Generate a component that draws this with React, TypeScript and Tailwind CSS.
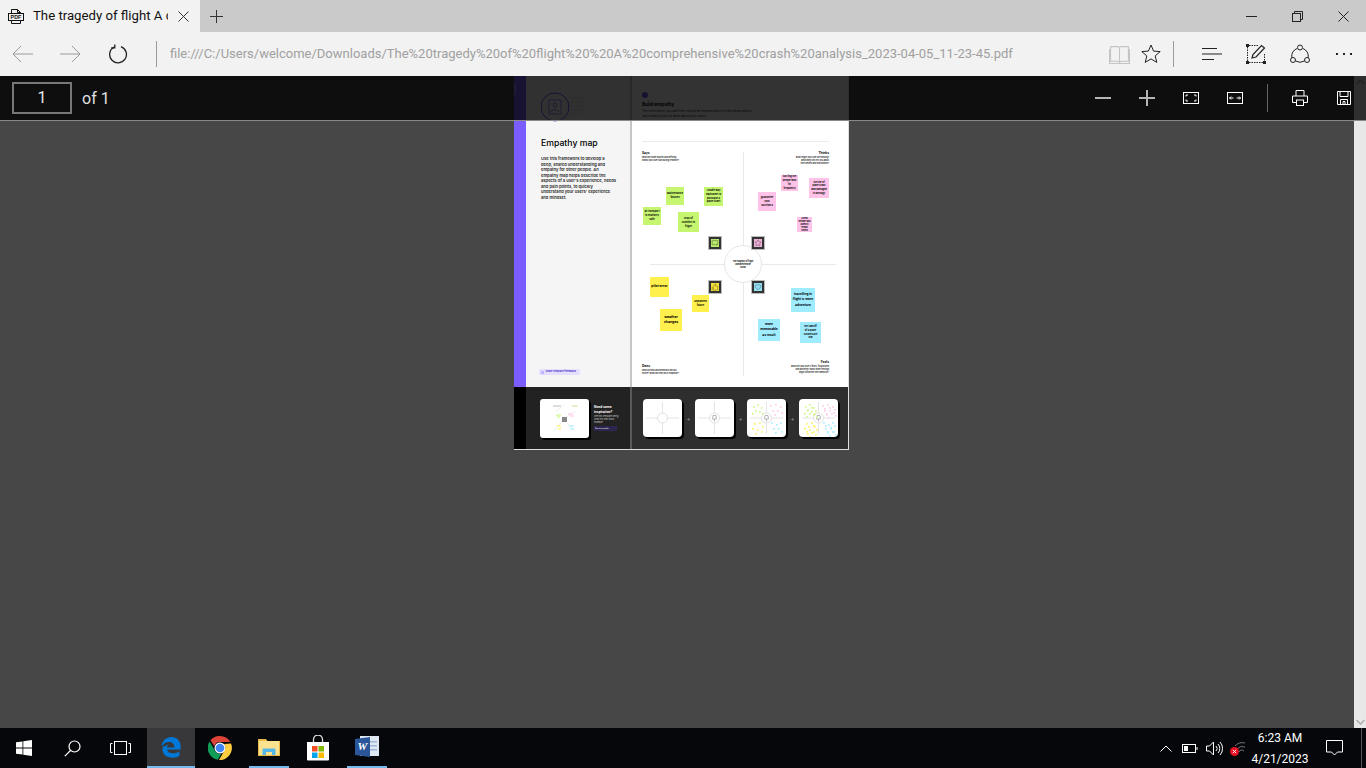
import type { ReactNode } from 'react';

const url =
  'file:///C:/Users/welcome/Downloads/The%20tragedy%20of%20flight%20%20A%20comprehensive%20crash%20analysis_2023-04-05_11-23-45.pdf';

type Note = { text: string; x: number; y: number; w: number; h: number; size: string; color: string };

// sticky notes sit on a free canvas, coordinates are relative to the white panel
const notes: Note[] = [
  { text: 'air transport\nis relatively\nsafe', x: 11, y: 131, w: 18, h: 18, size: 'text-[2.5px]', color: 'bg-[#c6f56f]' },
  { text: 'Maintenance\nfailures', x: 34, y: 111, w: 18, h: 18, size: 'text-[2.5px]', color: 'bg-[#c6f56f]' },
  { text: 'Unsafe way\nequivalent to\npurchase a\nplane ticket', x: 72, y: 111, w: 19, h: 19, size: 'text-[2.4px]', color: 'bg-[#c6f56f]' },
  { text: 'loss of\ncomfort in\nflight', x: 46, y: 136, w: 21, h: 20, size: 'text-[2.7px]', color: 'bg-[#c6f56f]' },
  { text: 'just fog the\npeople who\nfly\nfrequently', x: 149, y: 99, w: 17, h: 16, size: 'text-[2.4px]', color: 'bg-[#ffc2e8]' },
  { text: 'the site of\nplane crash\nwas damaged\nin ideology', x: 177, y: 102, w: 20, h: 20, size: 'text-[2.3px]', color: 'bg-[#ffc2e8]' },
  { text: 'guarantee\nyour\nsurvivors', x: 126, y: 116, w: 18, h: 19, size: 'text-[2.5px]', color: 'bg-[#ffc2e8]' },
  { text: 'a crew\nmember was\nasked to\nremain\nseated', x: 165, y: 141, w: 15, h: 15, size: 'text-[1.9px]', color: 'bg-[#ffc2e8]' },
  { text: 'pilot error', x: 18, y: 201, w: 19, h: 20, size: 'text-[3.4px]', color: 'bg-[#fff04d]' },
  { text: 'unplanned\nfailure', x: 60, y: 219, w: 17, h: 17, size: 'text-[2.4px]', color: 'bg-[#fff04d]' },
  { text: 'weather\nchanges', x: 28, y: 233, w: 22, h: 22, size: 'text-[3.4px]', color: 'bg-[#fff04d]' },
  { text: 'travelling in\nflight is more\nadventure', x: 159, y: 212, w: 24, h: 24, size: 'text-[3.2px]', color: 'bg-[#a0ecff]' },
  { text: 'more\nmemorable\nas result', x: 126, y: 243, w: 22, h: 22, size: 'text-[3.2px]', color: 'bg-[#a0ecff]' },
  { text: 'the takeoff\nof a plane\ncrashes are\nlow', x: 168, y: 246, w: 21, h: 21, size: 'text-[2.4px]', color: 'bg-[#a0ecff]' },
];

const tiles = [
  { x: 77, y: 161, color: 'bg-[#b9ea6c]', d: 'M1.5 2h7v5h-7zM7 7v1' },
  { x: 120, y: 161, color: 'bg-[#efb3d9]', d: 'M5 1l1.2 2.5 2.8.3-2 2 .5 2.7L5 7.2 2.500 8.500l.5-2.700-2-2 2.800-.3z' },
  { x: 77, y: 205, color: 'bg-[#f7df3c]', d: 'M3 4.500L5 1l1 .5v2.500h2.500l-.5 5H3zM1.500 4.500V9' },
  { x: 120, y: 205, color: 'bg-[#93dff2]', d: 'M5 8.500L1.500 5C.5 3 3.500 1 5 3c1.500-2 4.500 0 3.500 2z' },
];

const paragraph = [
  'Use this framework to develop a',
  'deep, shared understanding and',
  'empathy for other people. An',
  'empathy map helps describe the',
  "aspects of a user's experience, needs",
  'and pain points, to quickly',
  "understand your users' experience",
  'and mindset.',
];

const greenDots = [[6, 7], [10, 5], [14, 8], [8, 11], [12, 12], [5, 14], [15, 14]];
const pinkDots = [[23, 6], [28, 5], [33, 7], [25, 11], [30, 11], [34, 13], [27, 15]];
const yellowDots = [[7, 24], [12, 23], [15, 27], [5, 29], [10, 30], [14, 32], [8, 34]];
const blueDots = [[24, 23], [29, 25], [33, 23], [26, 29], [31, 29], [34, 32], [28, 33]];

function Stroke({ size = 20, children }: { size?: number; children: ReactNode }) {
  return (
    <svg width={size} height={size} viewBox="0 0 20 20" fill="none" stroke="currentColor" strokeWidth="1">
      {children}
    </svg>
  );
}

function Slot({ className, children }: { className: string; children?: ReactNode }) {
  return <div className={`flex items-center justify-center shrink-0 ${className}`}>{children}</div>;
}

function TabBar() {
  return (
    <div className="flex h-8 shrink-0 bg-[#cacaca] text-[#111]">
      <div className="flex w-[200px] items-center bg-[#f2f2f2] pl-2">
        <svg width="16" height="17" viewBox="0 0 16 17" fill="none" stroke="#111" strokeWidth="1">
          <path d="M3.500 5V1.500h6l3 3V5M3.500 12.500v3h9v-3M9.500 1.500v3h3" />
          <rect x="0.500" y="5.500" width="15" height="7" fill="#f2f2f2" />
          <text x="8" y="11" textAnchor="middle" fontSize="5.400" fontWeight="700" fill="#111" stroke="none" fontFamily="'Liberation Sans', sans-serif">PDF</text>
        </svg>
        <div className="ml-[9px] w-[135px] overflow-hidden whitespace-nowrap text-[13.2px]">
          The tragedy of flight A c
        </div>
        <svg className="ml-[10px]" width="11" height="11" viewBox="0 0 11 11" stroke="#333" strokeWidth="1">
          <path d="M.5.5l10 10M10.500.5l-10 10" />
        </svg>
      </div>
      <Slot className="w-8">
        <svg width="13" height="13" viewBox="0 0 13 13" stroke="#333" strokeWidth="1">
          <path d="M6.500 0v13M0 6.500h13" />
        </svg>
      </Slot>
      <div className="flex-1" />
      <Slot className="w-[46px]">
        <div className="h-px w-[11px] bg-[#222]" />
      </Slot>
      <Slot className="w-[46px]">
        <svg width="11" height="11" viewBox="0 0 11 11" fill="none" stroke="#222" strokeWidth="1">
          <rect x=".5" y="2.500" width="8" height="8" />
          <path d="M2.500 2.500v-2h8v8h-2" />
        </svg>
      </Slot>
      <Slot className="w-[46px]">
        <svg width="11" height="11" viewBox="0 0 11 11" stroke="#222" strokeWidth="1">
          <path d="M.5.5l10 10M10.500.5l-10 10" />
        </svg>
      </Slot>
    </div>
  );
}

function AddressBar() {
  return (
    <div className="flex h-11 shrink-0 items-center bg-[#f2f2f2]">
      <Slot className="w-[46px] text-[#9a9a9a]">
        <Stroke><path d="M0 10h20M8 2l-8 8 8 8" /></Stroke>
      </Slot>
      <Slot className="w-12 text-[#9a9a9a]">
        <Stroke><path d="M0 10h20M12 2l8 8-8 8" /></Stroke>
      </Slot>
      <Slot className="w-12 text-[#222]">
        <Stroke>
          <path strokeWidth="1.300" d="M6.200 3A8.400 8.400 0 1 0 13 2.600" />
          <path strokeWidth="1.300" d="M6.800 .4v3.400H3.200" />
        </Stroke>
      </Slot>
      <div className="ml-[14px] h-[26px] w-px bg-[#9b9b9b]" />
      <div className="ml-[13px] min-w-0 flex-1 overflow-hidden whitespace-nowrap text-[13px] text-[#a0a0a0]">{url}</div>
      <Slot className="w-8 text-[#c4c4c4]">
        <Stroke size={21}>
          <path d="M1.500 2.500h7.500l1 1 1-1h7.500v14h-7l-1.500 1-1.500-1h-7zM10 3.500v13.500M.5 5v13.500h19V5" />
        </Stroke>
      </Slot>
      <Slot className="w-8 text-[#222]">
        <Stroke>
          <path d="M10 1l2.600 6.100 6.600.5-5 4.300 1.600 6.500-5.800-3.500-5.800 3.500 1.600-6.500-5-4.300 6.600-.5z" />
        </Stroke>
      </Slot>
      <div className="ml-[6px] mr-4 h-[26px] w-px bg-[#9b9b9b]" />
      <Slot className="w-11 text-[#222]">
        <svg width="20" height="14" viewBox="0 0 20 14" stroke="currentColor">
          <path d="M0 1.500h15M0 7h20M0 12.500h12" />
        </svg>
      </Slot>
      <Slot className="w-11 text-[#222]">
        <Stroke>
          <path strokeDasharray="1.500 1" d="M1.500 3v15M3 1.500h10M3 18.500h15M18.500 10v8" />
          <rect x="0" y="0" width="3" height="3" fill="currentColor" stroke="none" />
          <rect x="0" y="17" width="3" height="3" fill="currentColor" stroke="none" />
          <rect x="17" y="17" width="3" height="3" fill="currentColor" stroke="none" />
          <path strokeWidth="1.200" d="M6 14l1-3.500 8.500-9 3 2.500-8.500 9z" />
        </Stroke>
      </Slot>
      <Slot className="w-11 text-[#222]">
        <Stroke>
          <circle cx="10" cy="3.500" r="2.500" />
          <circle cx="3" cy="16" r="2.500" />
          <circle cx="17" cy="16" r="2.500" />
          <path d="M7 4.500A9 9 0 0 0 1.800 13.800M13 4.500a9 9 0 0 1 5.200 9.300M5.500 17a9 9 0 0 0 9 0" />
        </Stroke>
      </Slot>
      <Slot className="w-11 gap-[5px]">
        <div className="h-[2px] w-[2px] bg-[#222]" />
        <div className="h-[2px] w-[2px] bg-[#222]" />
        <div className="h-[2px] w-[2px] bg-[#222]" />
      </Slot>
    </div>
  );
}

function PdfToolbar() {
  return (
    <div className="absolute inset-x-0 top-0 flex h-[45px] items-center border-b border-[#8a8a8a] bg-black/80 text-white">
      <div className="ml-3 flex h-8 w-[60px] items-center justify-center border-2 border-[#777] text-base text-[#e8e8e8]">1</div>
      <div className="ml-[10px] pt-px text-base text-[#e0e0e0]">of 1</div>
      <div className="flex-1" />
      <Slot className="w-11">
        <div className="h-[2px] w-4 bg-[#b5b5b5]" />
      </Slot>
      <Slot className="w-11 text-[#b5b5b5]">
        <svg width="16" height="16" viewBox="0 0 16 16" stroke="currentColor" strokeWidth="2">
          <path d="M8 0v16M0 8h16" />
        </svg>
      </Slot>
      <Slot className="w-11">
        <svg width="16" height="12" viewBox="0 0 16 12" fill="none" stroke="#fff" strokeWidth="1">
          <rect x=".5" y=".5" width="15" height="11" />
          <path d="M3 4.500V3h2M11 3h2v1.500M3 7.500V9h2M11 9h2V7.500" />
        </svg>
      </Slot>
      <Slot className="w-11">
        <svg width="16" height="12" viewBox="0 0 16 12" fill="none" stroke="#fff" strokeWidth="1">
          <rect x=".5" y=".5" width="15" height="11" />
          <path d="M2.500 6h4M9.500 6h4M4 4.500L2.500 6 4 7.500M12 4.500L13.500 6 12 7.500" />
        </svg>
      </Slot>
      <div className="mx-[10px] h-7 w-px bg-[#666]" />
      <Slot className="w-11">
        <svg width="16" height="16" viewBox="0 0 16 16" fill="none" stroke="#fff" strokeWidth="1">
          <path d="M4 6V.5h8V6M4 12.500H.5V6h15v6.500H12" />
          <rect x="4.500" y="10" width="7" height="5.500" />
        </svg>
      </Slot>
      <Slot className="w-11">
        <svg width="14" height="14" viewBox="0 0 14 14" fill="none" stroke="#fff" strokeWidth="1">
          <path d="M.5.5h13v13H.5z" />
          <path d="M3 .5v5h8v-5M3.500 13.500V8.500h7v5M6 13.500v-3h2v3" />
        </svg>
      </Slot>
    </div>
  );
}

function StickyNotes() {
  return (
    <>
      <div className="absolute left-[111px] top-[76px] h-[224px] w-px bg-[#e9e9e9]" />
      <div className="absolute left-[18px] top-[188px] h-px w-[186px] bg-[#e9e9e9]" />
      <div className="absolute left-[92px] top-[169px] flex h-[38px] w-[38px] items-center justify-center whitespace-pre-line rounded-full border border-[#e6e6e6] bg-white text-center text-[2.1px] font-bold leading-[3px] text-black">
        {'The tragedy of flight comprehensive\ncrash'}
      </div>
      {notes.map((n) => (
        <div
          key={n.text}
          className={`absolute flex items-center justify-center whitespace-pre-line text-center font-bold leading-[1.6] text-black ${n.color} ${n.size}`}
          style={{ left: n.x, top: n.y, width: n.w, height: n.h }}
        >
          {n.text}
        </div>
      ))}
      {tiles.map((t) => (
        <div
          key={`${t.x}-${t.y}`}
          className={`absolute flex h-3 w-3 items-center justify-center border-2 border-[#333] shadow-[0_0_0_1px_#bdbdbd] ${t.color}`}
          style={{ left: t.x, top: t.y }}
        >
          <svg width="8" height="8" viewBox="0 0 10 10" fill="none" stroke="#000" strokeOpacity=".35">
            <path d={t.d} />
          </svg>
        </div>
      ))}
    </>
  );
}

function Corner({ title, lines, right, className }: { title: string; lines: string[]; right?: boolean; className: string }) {
  return (
    <div className={`absolute text-[2px] font-semibold leading-[2.8px] text-[#111] ${right ? 'text-right' : ''} ${className}`}>
      <div className="mb-px text-[3.2px] font-bold leading-[3px] text-black">{title}</div>
      {lines.map((l) => (
        <div key={l} className="whitespace-nowrap">{l}</div>
      ))}
    </div>
  );
}

function Thumb({ hub, dots }: { hub?: boolean; dots?: number[][][] }) {
  const colors = ['#d6f79b', '#ffd3ee', '#fff27a', '#b5f0ff'];
  return (
    <div className="h-[38px] w-[39px] shrink-0 rounded-[4px] bg-white shadow-[2px_2px_0_#000]">
      <svg width="39" height="38" viewBox="0 0 39 38" fill="none">
        <path d="M19.500 3v32M3 19h33" stroke="#e4e4e4" />
        <circle cx="19.500" cy="19" r="5" fill="#fff" stroke="#e0e0e0" />
        {hub && <path d="M18 16.500h3l.5 3.500h-4zM19.500 20v2.500" stroke="#b5b5b5" />}
        {dots?.map((group, i) =>
          group.map(([x, y]) => <rect key={`${i}-${x}-${y}`} x={x} y={y} width="1.8" height="1.8" fill={colors[i]} />),
        )}
      </svg>
    </div>
  );
}

function PlusMark() {
  return <div className="w-[13px] shrink-0 text-center text-[7px] leading-none text-[#8a8a8a]">+</div>;
}

function PdfPage() {
  const allDots = [greenDots, pinkDots, yellowDots, blueDots];
  const denseDots = allDots.map((g) => [...g, ...g.map(([x, y]) => [x + 2, y + 3])]);
  return (
    <div className="ml-[514px] flex h-[374px] w-[335px] flex-col border-b border-r border-[#dedede] font-['Inter',sans-serif]">
      <div className="flex h-[311px]">
        <div className="w-3 shrink-0 bg-[#7a5cff] pt-[7px]">
          <div className="mx-auto rotate-180 text-center text-[3px] leading-[3px] text-[#cfc6ff] [writing-mode:vertical-rl]">Template</div>
        </div>
        <div className="flex w-[106px] shrink-0 flex-col border-r-2 border-[#c6c6c6] bg-[#f5f5f5] pl-[15px]">
          <div className="mt-[16px] flex h-[30px] items-center">
            <svg width="45" height="30" viewBox="0 0 45 30" fill="none" stroke="#6a55f0">
              <circle cx="14" cy="15" r="14" strokeWidth="1" />
              <rect x="8" y="8" width="12" height="14" strokeWidth=".7" />
              <circle cx="14" cy="13" r="2" strokeWidth=".7" />
              <path d="M10 20c0-3 8-3 8 0" strokeWidth=".7" />
              <path d="M30 6h14M30 10h14M30 14h14M30 18h14M30 22h10" stroke="#bbb" strokeWidth="1" strokeDasharray="1 1" />
            </svg>
          </div>
          <div className="mt-[15px] text-[8.7px] font-medium leading-[12px] text-black">Empathy map</div>
          <div className="mt-[7px] text-[4.1px] font-semibold leading-[5.5px] text-[#222]">
            {paragraph.map((l) => (
              <div key={l} className="whitespace-nowrap">{l}</div>
            ))}
          </div>
          <div className="-ml-[2px] mb-[12px] mt-auto flex h-[6px] w-[41px] items-center rounded-[1px] bg-[#e6e0ff] pl-[2px] text-[2.5px] font-bold text-[#4a33c5]">
            <div className="mr-[1.5px] h-[3px] w-[3px] shrink-0 bg-[#c0b3ff]" />
            <span className="whitespace-nowrap">Share template feedback</span>
          </div>
        </div>
        <div className="relative flex-1 bg-white pl-[10px]">
          <div className="mt-[16px] h-[6px] w-[6px] rounded-full bg-[#6a55f0]" />
          <div className="mt-[4px] text-[4.6px] font-bold leading-[6px] text-black">Build empathy</div>
          <div className="mt-[1px] w-[110px] text-[3.1px] leading-[5px] text-[#222]">
            The information you add here should be representative of the observations and research you've done about your users.
          </div>
          <div className="mt-[22px] h-px w-[187px] bg-[#ebebeb]" />
          <StickyNotes />
          <Corner title="Says" lines={['What are some quotes and defining', 'words your user said during research?']} className="left-[10px] top-[76px]" />
          <Corner title="Thinks" right lines={['What might your user be thinking?', 'What does this tell you about', 'their beliefs and motivations?']} className="right-[19px] top-[76px]" />
          <Corner title="Does" lines={['What actions and behaviors did you', 'notice? What did they do in response?']} className="left-[10px] top-[289px]" />
          <Corner title="Feels" right lines={["What are your user's fears, frustrations", 'and anxieties? What other feelings', 'might influence their behavior?']} className="right-[19px] top-[285px]" />
        </div>
      </div>
      <div className="flex flex-1">
        <div className="w-3 shrink-0 bg-black" />
        <div className="flex w-[106px] shrink-0 items-center border-r-2 border-[#5a5a5a] bg-[#222] pl-[14px]">
          <div className="h-[39px] w-[49px] shrink-0 rounded-[3px] bg-white shadow-[2px_2px_0_#000]">
            <svg width="49" height="39" viewBox="0 0 49 39" fill="none">
              <path d="M24 6l-8 6M24 20L14 32M24 20l11-8M24 20l10 11" stroke="#eee" />
              <rect x="13" y="6" width="8" height="2" fill="#ddd" />
              <rect x="32" y="6" width="6" height="2" fill="#e6efc8" />
              <rect x="22" y="18" width="5" height="5" fill="#888" />
              <path d="M16 16h5M17 18h3" stroke="#c6f56f" />
              <path d="M28 15h5M30 17h4" stroke="#ffc2e8" />
              <path d="M17 27h4M18 30h3" stroke="#fff04d" />
              <path d="M29 27h5M30 30h4" stroke="#a0ecff" />
            </svg>
          </div>
          <div className="ml-[5px] w-[25px]">
            <div className="text-[3.2px] font-bold leading-[4.5px] text-white">Need some inspiration?</div>
            <div className="mt-px text-[2.2px] leading-[3px] text-[#ccc]">See this template being used in a real world example.</div>
            <div className="mt-[2px] w-[23px] bg-[#2d2650] pl-px text-[1.8px] leading-[5px] text-white">See an example</div>
          </div>
        </div>
        <div className="flex flex-1 items-center bg-[#2e2e2e] pl-[11px]">
          <Thumb />
          <PlusMark />
          <Thumb hub />
          <PlusMark />
          <Thumb hub dots={allDots} />
          <PlusMark />
          <Thumb hub dots={denseDots} />
        </div>
      </div>
    </div>
  );
}

function Scrollbar() {
  return (
    <div className="flex w-3 shrink-0 flex-col justify-between bg-[#e8e8e8] py-[3px] text-[#a8a8a8]">
      <svg className="mx-auto" width="9" height="6" viewBox="0 0 9 6" fill="none" stroke="currentColor" strokeWidth="1.3">
        <path d="M.5 5l4-4 4 4" />
      </svg>
      <svg className="mx-auto" width="9" height="6" viewBox="0 0 9 6" fill="none" stroke="currentColor" strokeWidth="1.3">
        <path d="M.5 1l4 4 4-4" />
      </svg>
    </div>
  );
}

function Taskbar() {
  return (
    <div className="flex h-10 shrink-0 items-stretch bg-[#05070b] text-white">
      <Slot className="w-12">
        <svg width="16" height="16" viewBox="0 0 16 16" fill="#fff">
          <path d="M0 2.300l6.500-.9v6.200H0zM7.300 1.300L16 0v7.600H7.300zM0 8.400h6.500v6.200L0 13.700zM7.300 8.400H16V16l-8.700-1.300z" />
        </svg>
      </Slot>
      <Slot className="w-12">
        <svg width="17" height="17" viewBox="0 0 17 17" fill="none" stroke="#fff" strokeWidth="1.2">
          <circle cx="10.500" cy="6.500" r="5.500" />
          <path d="M6.500 10.500L.8 16.200" />
        </svg>
      </Slot>
      <Slot className="w-12">
        <svg width="21" height="14" viewBox="0 0 21 14" fill="none" stroke="#fff" strokeWidth="1">
          <rect x="4.500" y=".5" width="12" height="13" />
          <path d="M2.500 2.500H.5v9h2M18.500 2.500h2v9h-2" />
        </svg>
      </Slot>
      <Slot className="ml-[3px] w-12 border-b-2 border-[#76b9ed] bg-[#38383b]">
        <svg width="20" height="21" viewBox="0 0 20 21">
          <path fill="#0078d7" d="M.3 9.500C1.200 3.600 5.300 0 10.300 0c5.600 0 9.400 4 9.400 9.800v2.600H6.200c.2 3.800 6.600 5.400 12.200 2v4.600c-5 2.800-15 2.600-16.800-5-.5-2.500.3-5 2.500-6.800-.8 1.200-1.200 2.300-1.400 3.400 1.500-2 3.300-3 5.500-3.200-1.400.4-2.200 1.500-2.200 3h7.400c.2-6-8-8-13.100-1z" />
        </svg>
      </Slot>
      <Slot className="w-[49px]">
        <svg width="24" height="24" viewBox="0 0 24 24">
          <path fill="#db4437" d="M12 0a12 12 0 0 1 10.400 6H12a6 6 0 0 0-5.700 4.200L2.400 4.300A12 12 0 0 1 12 0z" />
          <path fill="#0f9d58" d="M1.600 5.500l5.200 9A6 6 0 0 0 13.500 17.800l-3.700 6A12 12 0 0 1 1.600 5.500z" />
          <path fill="#ffcd40" d="M23 7.500A12 12 0 0 1 11 24l5.200-9A6 6 0 0 0 16 8z" />
          <circle cx="12" cy="12" r="5.500" fill="#fff" />
          <circle cx="12" cy="12" r="4.300" fill="#4285f4" />
        </svg>
      </Slot>
      <div className="flex w-[49px] shrink-0 justify-center">
        <div className="flex w-10 items-center justify-center border-b-2 border-[#76b9ed]">
          <svg width="22" height="18" viewBox="0 0 22 18">
            <path fill="#e8b94a" d="M0 1h8l1.500 2H22v15H0z" />
            <path fill="#fbe28e" d="M1 3h20v14H1z" />
            <path fill="#55b6e8" d="M4.500 17v-5.500a1 1 0 0 1 1-1h11a1 1 0 0 1 1 1V17h-3.500v-3H8v3z" />
          </svg>
        </div>
      </div>
      <Slot className="w-[49px]">
        <svg width="24" height="26" viewBox="0 0 24 26">
          <path fill="none" stroke="#ddd" strokeWidth="1.3" d="M7.500 8V4.500a4.500 4.500 0 0 1 9 0V8" />
          <path fill="#fff" d="M1 7h22v17.500a1 1 0 0 1-1 1H2a1 1 0 0 1-1-1z" />
          <rect x="6" y="11" width="5.500" height="5.500" fill="#f25022" />
          <rect x="12.500" y="11" width="5.500" height="5.500" fill="#7fba00" />
          <rect x="6" y="17.500" width="5.500" height="5.500" fill="#00a4ef" />
          <rect x="12.500" y="17.500" width="5.500" height="5.500" fill="#ffb900" />
        </svg>
      </Slot>
      <div className="flex w-[49px] shrink-0 justify-center">
        <div className="flex w-10 items-center justify-center border-b-2 border-[#76b9ed]">
          <svg width="24" height="24" viewBox="0 0 24 24">
            <path fill="#dfe7f3" d="M5 1h19v20H5z" />
            <path fill="#9db5d8" d="M13 6h9v1.500h-9zM13 10h9v1.500h-9zM13 14h9v1.500h-9z" />
            <path fill="#2a5699" d="M0 4l15-2v20L0 20z" />
            <text x="7.500" y="15" textAnchor="middle" fontSize="11" fontWeight="700" fontStyle="italic" fill="#fff" fontFamily="'Liberation Serif', serif">W</text>
          </svg>
        </div>
      </div>
      <div className="flex-1" />
      <Slot className="w-6">
        <svg width="12" height="7" viewBox="0 0 12 7" fill="none" stroke="#fff" strokeWidth="1">
          <path d="M.5 6.500L6 1l5.500 5.500" />
        </svg>
      </Slot>
      <Slot className="w-6">
        <svg width="16" height="9" viewBox="0 0 16 9" fill="none" stroke="#fff" strokeWidth="1">
          <rect x=".5" y=".5" width="13" height="8" />
          <rect x="2" y="2" width="4" height="5" fill="#fff" stroke="none" />
          <path d="M15 3v3" />
        </svg>
      </Slot>
      <Slot className="w-6">
        <svg width="17" height="15" viewBox="0 0 17 15" fill="none" stroke="#fff" strokeWidth="1">
          <path d="M.5 5v5h3l4 4V1l-4 4zM10 5a3.500 3.500 0 0 1 0 5M12 3a6.500 6.500 0 0 1 0 9M14 1a9.500 9.500 0 0 1 0 13" />
        </svg>
      </Slot>
      <Slot className="w-6">
        <svg width="16" height="15" viewBox="0 0 16 15" fill="none">
          <path d="M5 5a10 10 0 0 1 10-3M7 8a7 7 0 0 1 8-2M9 11a3 3 0 0 1 5-1" stroke="#777" strokeWidth="1" />
          <circle cx="4.500" cy="10.500" r="4.500" fill="#e81123" />
          <path d="M2.800 8.800l3.400 3.400M6.200 8.800l-3.400 3.400" stroke="#fff" strokeWidth="1" />
        </svg>
      </Slot>
      <div className="flex w-[60px] shrink-0 flex-col items-center justify-center pt-px text-xs leading-[21px]">
        <div>6:23 AM</div>
        <div>4/21/2023</div>
      </div>
      <Slot className="w-12">
        <svg width="17" height="16" viewBox="0 0 17 16" fill="none" stroke="#fff" strokeWidth="1">
          <path d="M.5.5h16v11.500h-5L8.500 15 5.500 12h-5z" />
        </svg>
      </Slot>
      <div className="ml-[3px] w-[5px] border-l border-[#555]" />
    </div>
  );
}

export default function App() {
  return (
    <div className="flex h-screen w-full flex-col overflow-hidden font-['Roboto',sans-serif]">
      <TabBar />
      <AddressBar />
      <div className="relative flex flex-1 overflow-hidden">
        <div className="flex-1 bg-[#474747]">
          <PdfPage />
        </div>
        <Scrollbar />
        <PdfToolbar />
      </div>
      <Taskbar />
    </div>
  );
}
